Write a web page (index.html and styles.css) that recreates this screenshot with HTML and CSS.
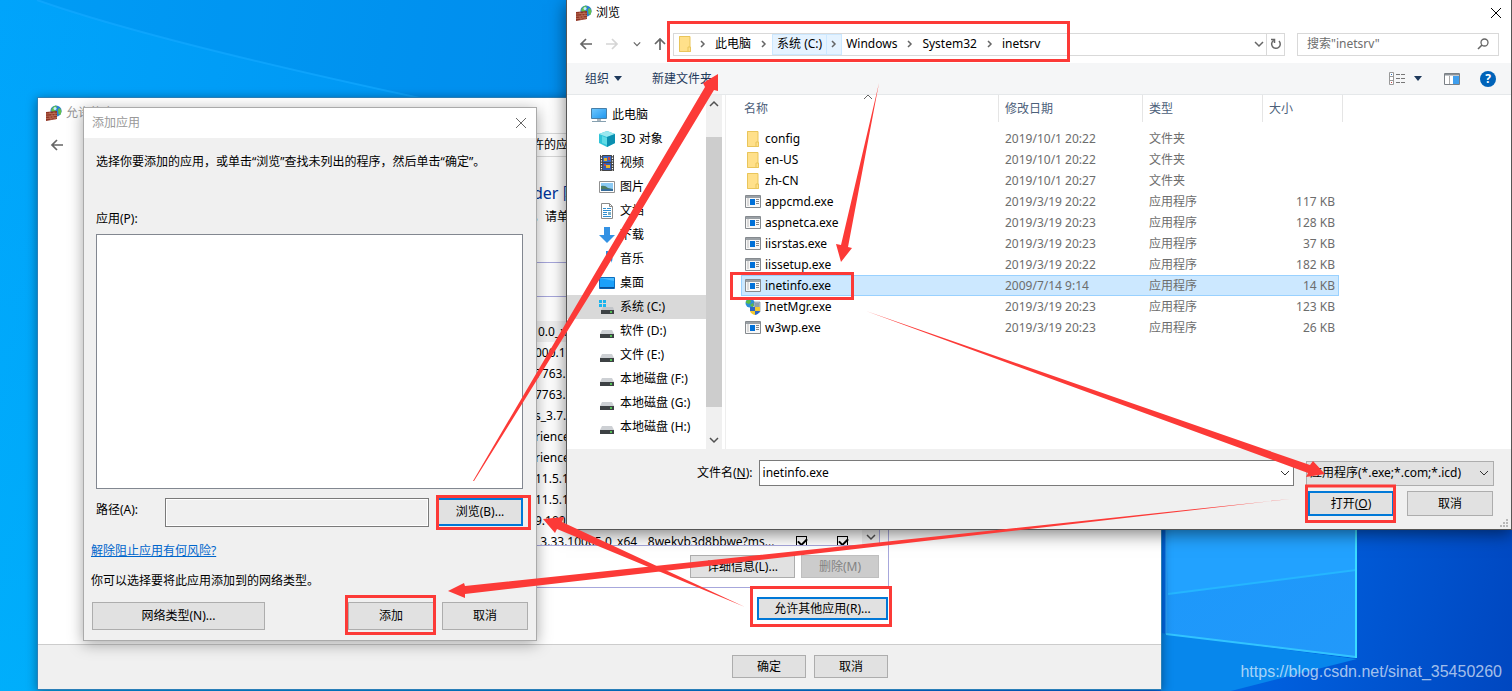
FILE: index.html
```html
<!DOCTYPE html>
<html lang="zh-CN">
<head>
<meta charset="utf-8">
<title>允许的应用</title>
<link rel="stylesheet" href="styles.css">
</head>
<body>
<svg class="defs" aria-hidden="true">
  <defs>
    <linearGradient id="gPane" x1="0" y1="0" x2="1" y2="1"><stop offset="0" stop-color="#1c98fb"/><stop offset="1" stop-color="#2299fa"/></linearGradient>
    <linearGradient id="gScreen" x1="0" y1="0" x2="1" y2="1"><stop offset="0" stop-color="#6fc8ff"/><stop offset="1" stop-color="#1e96ee"/></linearGradient>
    <symbol id="firewall" viewBox="0 0 16 16">
      <circle cx="10" cy="6" r="5.6" fill="#2a7fd6"/><path d="M6 3q2-2.500 4-2.500l1 2-2 2 1 2-3 1-2-2zM12 4l2-1 1.500 3-1 4-2-1z" fill="#62c04a"/><circle cx="9" cy="3.500" r="1.500" fill="#c8f0ff"/>
      <path d="M0 7l11-1v8l-11 2z" fill="#8f3423"/><path d="M0 9l11-.8M0 11.300l11-.8M0 13.600l11-1M4 7v2M8 7v2M6 9v2M9 9v2M4 11v2M7 11v2M5 13v2M9 13v2" stroke="#d28b72" stroke-width=".6"/>
    </symbol>
    <symbol id="folder" viewBox="0 0 14 16"><path d="M1 0h11v11h1v5H1z" fill="#ffe08a"/><path d="M1.500.500h10.500v10.500h.500v4.500H1.500zM10 15v-4h2" fill="none" stroke="#e9c55b"/></symbol>
    <symbol id="exe" viewBox="0 0 16 13"><path d="M.5.5h15v12H.5z" fill="#f8f8f8" stroke="#858a8f"/><path d="M1 1h14v2H1z" fill="#9aa0a5"/><path d="M2 3h2v8H2z" fill="#dadada"/><path d="M5 4h5v6H5z" fill="#0070d8"/><path d="M11 4.500h3M11 6.500h3M11 8.500h3" stroke="#8a8a8a"/></symbol>
    <symbol id="drive" viewBox="0 0 16 16"><path d="M3 7h10l2 4H1z" fill="#cdd0d4"/><path d="M1 11h14v4H1z" fill="#3d4144"/><path d="M11 13h2" stroke="#5bea5b" stroke-width="1.500"/></symbol>
    <symbol id="chev-d" viewBox="0 0 10 10"><path d="M1 3l4 4 4-4" fill="none" stroke="currentColor" stroke-width="1.500"/></symbol>
    <symbol id="chev-thin" viewBox="0 0 10 10"><path d="M1 3l4 4 4-4" fill="none" stroke="currentColor"/></symbol>
    <symbol id="chev-u" viewBox="0 0 10 10"><path d="M1 7l4-4 4 4" fill="none" stroke="currentColor" stroke-width="1.500"/></symbol>
    <symbol id="chev-r" viewBox="0 0 10 10"><path d="M3 2l3 3-3 3" fill="none" stroke="currentColor" stroke-width="1.500"/></symbol>
    <symbol id="left" viewBox="0 0 14 14"><path d="M13 7H2M7 2L2 7l5 5" fill="none" stroke="currentColor" stroke-width="1.700"/></symbol>
    <symbol id="close" viewBox="0 0 12 12"><path d="M1 1l10 10M11 1L1 11" fill="none" stroke="currentColor"/></symbol>
    <symbol id="tri" viewBox="0 0 8 5"><path d="M0 0h8L4 5z" fill="currentColor"/></symbol>
  </defs>
</svg>

<main class="desktop">
  <svg class="streak" width="570" height="98" viewBox="0 0 570 98" aria-hidden="true">
    <path d="M37 0Q150 40 420 98H570V0z" fill="#0078dc" opacity=".16"/>
    <path d="M37 0Q150 40 420 98" fill="none" stroke="#12a8ff" stroke-width="2" opacity=".7"/>
  </svg>
  <svg class="wallpaper" width="351" height="162" viewBox="0 0 351 162" aria-hidden="true">
    <path d="M0 104L196 130 70 162H0z" fill="#0787ec"/>
    <path d="M5 0h190v129L5 105z" fill="url(#gPane)"/>
    <path d="M5 0h190v41L7 65z" fill="#22a2ff"/>
    <path d="M7 65l188-24" stroke="#25b6ff" stroke-width="2"/>
    <path d="M5 0v105" stroke="#36a8f8"/>
    <path d="M5 105l190 23" stroke="#32c4ff" stroke-width="2"/>
    <path d="M195 0v129" stroke="#3adcff" stroke-width="2"/>
  </svg>
  <p class="watermark">https://blog.csdn.net/sinat_35450260</p>

  <section class="window allowed" aria-label="允许的应用">
    <header class="titlebar muted"><svg width="16" height="16"><use href="#firewall"/></svg><span>允许的应用</span></header>
    <div class="allowed-nav">
      <button class="icon-btn" aria-label="后退"><svg width="14" height="14"><use href="#left"/></svg></button>
      <div class="allowed-address">许的应</div>
    </div>
    <div class="allowed-body">
      <h1>der 防</h1>
      <p class="hint">，请单</p>
      <div class="group">
        <div class="group-head"></div>
        <div class="app-list">
          <ul>
            <li class="on">0.0_x</li><li>000.17</li><li>7763.1</li><li>7763.1</li><li>s_3.7.0</li><li>rience</li><li>rience</li><li>11.5.1</li><li>11.5.1</li><li>9.1002</li>
            <li><span>_3.33.10065.0_x64__8wekyb3d8bbwe?ms...</span><input type="checkbox" checked aria-label="专用"><input type="checkbox" checked aria-label="公用"></li>
          </ul>
          <div class="list-scroll"><svg width="10" height="10"><use href="#chev-d"/></svg></div>
        </div>
        <div class="group-actions"><button class="btn detail">详细信息(L)...</button><button class="btn remove" disabled>删除(M)</button></div>
      </div>
      <button class="btn focus other">允许其他应用(R)...</button>
    </div>
    <footer class="allowed-foot"><button class="btn">确定</button><button class="btn">取消</button></footer>
  </section>

  <section class="window add" role="dialog" aria-label="添加应用">
    <header class="add-title"><span>添加应用</span><button class="icon-btn" aria-label="关闭"><svg width="12" height="12"><use href="#close"/></svg></button></header>
    <div class="add-body">
      <p class="lead">选择你要添加的应用，或单击“浏览”查找未列出的程序，然后单击“确定”。</p>
      <label for="apps">应用(P):</label>
      <select id="apps" class="apps" size="8"></select>
      <div class="path-row"><label for="path">路径(A):</label><input id="path" type="text" readonly><button class="btn focus">浏览(B)...</button></div>
      <div class="more"><a href="#risk">解除阻止应用有何风险?</a><p>你可以选择要将此应用添加到的网络类型。</p></div>
      <div class="add-actions"><button class="btn net">网络类型(N)...</button><button class="btn">添加</button><button class="btn">取消</button></div>
    </div>
  </section>

  <section class="window browse" role="dialog" aria-label="浏览">
    <header class="titlebar"><svg width="16" height="16"><use href="#firewall"/></svg><span>浏览</span><button class="icon-btn close" aria-label="关闭"><svg width="12" height="12"><use href="#close"/></svg></button></header>
    <div class="browse-nav">
      <div class="history">
        <button class="icon-btn" aria-label="后退"><svg width="14" height="14"><use href="#left"/></svg></button>
        <button class="icon-btn dim" aria-label="前进"><svg class="flip" width="14" height="14"><use href="#left"/></svg></button>
        <button class="icon-btn" aria-label="历史"><svg width="8" height="8"><use href="#chev-d"/></svg></button>
        <button class="icon-btn" aria-label="向上"><svg class="up" width="14" height="14"><use href="#left"/></svg></button>
      </div>
      <nav class="address" aria-label="路径">
        <svg class="here" width="14" height="16"><use href="#folder"/></svg>
        <svg class="sep" width="10" height="10"><use href="#chev-r"/></svg><a href="#pc">此电脑</a>
        <svg class="sep" width="10" height="10"><use href="#chev-r"/></svg><span class="hot"><a href="#c">系统 (C:)</a><span class="hot-sep"><svg width="10" height="10"><use href="#chev-r"/></svg></span></span><a href="#windows">Windows</a>
        <svg class="sep" width="10" height="10"><use href="#chev-r"/></svg><a href="#system32">System32</a>
        <svg class="sep" width="10" height="10"><use href="#chev-r"/></svg><a href="#inetsrv">inetsrv</a>
        <button class="icon-btn drop" aria-label="以前的位置"><svg width="10" height="10"><use href="#chev-d"/></svg></button>
        <button class="icon-btn refresh" aria-label="刷新"><svg width="12" height="12" viewBox="0 0 12 12"><path d="M3.500 2.500A4.300 4.300 0 1 0 9 3M1 1.500h3.500v3.500" fill="none" stroke="currentColor" stroke-width="1.500"/></svg></button>
      </nav>
      <div class="search"><input type="text" placeholder='搜索"inetsrv"' aria-label="搜索"><svg width="12" height="12" viewBox="0 0 12 12"><circle cx="7.500" cy="4.500" r="3.500" fill="none" stroke="#666" stroke-width="1.300"/><path d="M5 7L1 11" stroke="#666" stroke-width="1.600"/></svg></div>
    </div>
    <div class="toolbar">
      <button class="tool">组织 <svg width="8" height="5"><use href="#tri"/></svg></button>
      <button class="tool">新建文件夹</button>
      <button class="tool view" aria-label="视图"><svg width="17" height="13" viewBox="0 0 17 13"><path d="M.5.5h4v12h-4zM.5 4.500h4M.5 8.500h4" fill="#fff" stroke="#999"/><path d="M7 2.500h4M12 2.500h4M7 6.500h4M12 6.500h4M7 10.500h4M12 10.500h4" stroke="#777"/><path d="M2 2.500h1" stroke="#2c76c8"/><path d="M2 10.500h1" stroke="#c44"/></svg><svg width="8" height="5"><use href="#tri"/></svg></button>
      <button class="tool" aria-label="预览窗格"><svg width="16" height="12" viewBox="0 0 16 12"><path d="M.5.5h15v11H.5z" fill="#fff" stroke="#7a8086"/><path d="M1 1h14v1.500H1z" fill="#8b9196"/><path d="M9 3h6v8H9z" fill="#3f9fee"/><path d="M5.500 3v8" stroke="#aaa"/></svg></button>
      <button class="help" aria-label="帮助">?</button>
    </div>
    <div class="content">
      <ul class="tree">
        <li class="root"><a href="#pc"><svg width="16" height="16" viewBox="0 0 16 16"><path d="M.5 1.500h15v10H.5z" fill="url(#gScreen)" stroke="#477fa8"/><path d="M6 12h4v2H6z" fill="#aeb8bf"/><path d="M1 14.500h14" stroke="#86a0b0"/></svg>此电脑</a></li>
        <li><a href="#3d"><svg width="16" height="16" viewBox="0 0 16 16"><path d="M8 0l8 3v9l-8 4-8-4V3z" fill="#2fc4d8"/><path d="M8 0l8 3-8 3-8-3z" fill="#9be8ef"/><path d="M8 6l8-3v9l-8 4z" fill="#0b8fb0"/><path d="M3 5l5 2v7l-5-2z" fill="#5fdbe6"/></svg>3D 对象</a></li>
        <li><a href="#video"><svg width="16" height="16" viewBox="0 0 16 16"><path d="M1 0h14v16H1z" fill="#444"/><path d="M4 1h8v6H4z" fill="#3569c9"/><path d="M4 8h8v7H4z" fill="#335cb5"/><path d="M5 3h3v3H5zM7 10h4v3H7z" fill="#e7b52e"/><path d="M9 2h2v3H9zM5 9h2v2H5z" fill="#c84b41"/><path d="M2.500 0v16M13.500 0v16" stroke="#fff" stroke-width="1.200" stroke-dasharray="1.300 1.300"/></svg>视频</a></li>
        <li><a href="#pictures"><svg width="16" height="16" viewBox="0 0 16 16"><path d="M.5 2.500h15v11H.5z" fill="#fff" stroke="#909090"/><path d="M2 4h12v8H2z" fill="#8ccaf4"/><path d="M2 7q4-1 7 2l5 1v2H2z" fill="#4c7b62"/><path d="M2 10h12v2H2z" fill="#376d9b"/></svg>图片</a></li>
        <li><a href="#docs"><svg width="16" height="16" viewBox="0 0 16 16"><path d="M2.500.5h8l3 3v12h-11z" fill="#fff" stroke="#8b8b8b"/><path d="M10.500.5v3h3" fill="none" stroke="#8b8b8b"/><path d="M4 5.500h3M8 5.500h4M4 7.500h8M4 9.500h4M4 11.500h4M4 13.500h8" stroke="#2e8ed0"/><path d="M9 9h3v3H9z" fill="#7bb1c7"/></svg>文档</a></li>
        <li><a href="#downloads"><svg width="16" height="16" viewBox="0 0 16 16"><path d="M5 0h6v8h5l-8 8-8-8h5z" fill="#3492e4"/></svg>下载</a></li>
        <li><a href="#music"><svg width="16" height="16" viewBox="0 0 16 16"><path d="M7 0h2q0 3 3 5t0 7q1-4-3-5v6q-1 3-4 3t-2-3 4-2z" fill="#1e90e8"/></svg>音乐</a></li>
        <li><a href="#desk"><svg width="16" height="16" viewBox="0 0 16 16"><path d="M.5 2.500h15v11H.5z" fill="#1ba0fa" stroke="#0c6fc0"/><path d="M1 12h14v1.500H1z" fill="#0b4f96"/><path d="M1 3l14 3V3z" fill="#4bbcff"/></svg>桌面</a></li>
        <li class="on"><a href="#c"><svg width="16" height="16" viewBox="0 0 16 16"><path d="M4 8h10l1 3H2z" fill="#c2c5c9"/><path d="M2 11h13v4H2z" fill="#3d4144"/><path d="M11 13h2" stroke="#5bea5b" stroke-width="1.500"/><path d="M0 1h3v3H0zM4 1h3v3H4zM0 5h3v3H0zM4 5h3v3H4z" fill="#18b4ee"/></svg>系统 (C:)</a></li>
        <li><a href="#d"><svg width="16" height="16"><use href="#drive"/></svg>软件 (D:)</a></li>
        <li><a href="#e"><svg width="16" height="16"><use href="#drive"/></svg>文件 (E:)</a></li>
        <li><a href="#f"><svg width="16" height="16"><use href="#drive"/></svg>本地磁盘 (F:)</a></li>
        <li><a href="#g"><svg width="16" height="16"><use href="#drive"/></svg>本地磁盘 (G:)</a></li>
        <li><a href="#h"><svg width="16" height="16"><use href="#drive"/></svg>本地磁盘 (H:)</a></li>
      </ul>
      <div class="scroll"><svg width="10" height="10"><use href="#chev-u"/></svg><div class="thumb"></div><svg width="10" height="10"><use href="#chev-d"/></svg></div>
      <div class="files">
        <svg class="sort" width="10" height="10" aria-hidden="true"><path d="M1 7l4-4 4 4" fill="none" stroke="#666"/></svg>
        <table>
          <colgroup><col class="c-name"><col class="c-date"><col class="c-type"><col class="c-size"><col class="c-end"></colgroup>
          <thead><tr><th>名称</th><th>修改日期</th><th>类型</th><th>大小</th><th></th></tr></thead>
          <tbody>
            <tr><td><svg width="16" height="16"><use href="#folder"/></svg>config</td><td>2019/10/1 20:22</td><td>文件夹</td><td></td></tr>
            <tr><td><svg width="16" height="16"><use href="#folder"/></svg>en-US</td><td>2019/10/1 20:22</td><td>文件夹</td><td></td></tr>
            <tr><td><svg width="16" height="16"><use href="#folder"/></svg>zh-CN</td><td>2019/10/1 20:27</td><td>文件夹</td><td></td></tr>
            <tr><td><svg width="16" height="13"><use href="#exe"/></svg>appcmd.exe</td><td>2019/3/19 20:22</td><td>应用程序</td><td>117 KB</td></tr>
            <tr><td><svg width="16" height="13"><use href="#exe"/></svg>aspnetca.exe</td><td>2019/3/19 20:23</td><td>应用程序</td><td>128 KB</td></tr>
            <tr><td><svg width="16" height="13"><use href="#exe"/></svg>iisrstas.exe</td><td>2019/3/19 20:23</td><td>应用程序</td><td>37 KB</td></tr>
            <tr><td><svg width="16" height="13"><use href="#exe"/></svg>iissetup.exe</td><td>2019/3/19 20:22</td><td>应用程序</td><td>182 KB</td></tr>
            <tr class="on"><td><svg width="16" height="13"><use href="#exe"/></svg>inetinfo.exe</td><td>2009/7/14 9:14</td><td>应用程序</td><td>14 KB</td></tr>
            <tr><td><svg width="16" height="16" viewBox="0 0 16 16"><circle cx="5" cy="4" r="4.500" fill="#2c8fd8"/><path d="M1 2l4-2 1 3-2 2-3-1zM5 6l3-2 1 3-2 1z" fill="#5cbb45"/><path d="M9 3h6v10H9z" fill="#b9c7d4" stroke="#6d8090" stroke-width=".6"/><path d="M10 5h4M10 7h4" stroke="#456" stroke-width=".7"/><path d="M5 8h5v4H5z" fill="#2d66c6"/><path d="M10 8h5v4h-5z" fill="#f3c92f"/><path d="M5 12h5v4q-4-1-5-4z" fill="#f3c92f"/><path d="M10 12h5q-1 3-5 4z" fill="#2d66c6"/></svg>InetMgr.exe</td><td>2019/3/19 20:23</td><td>应用程序</td><td>123 KB</td></tr>
            <tr><td><svg width="16" height="13"><use href="#exe"/></svg>w3wp.exe</td><td>2019/3/19 20:23</td><td>应用程序</td><td>26 KB</td></tr>
          </tbody>
        </table>
      </div>
    </div>
    <footer class="browse-foot">
      <div class="name-row">
        <label for="fname">文件名(<u>N</u>):</label>
        <div class="combo"><input id="fname" type="text" value="inetinfo.exe"><svg width="10" height="10"><use href="#chev-thin"/></svg></div>
        <div class="filter"><select aria-label="文件类型"><option>应用程序(*.exe;*.com;*.icd)</option></select><svg width="10" height="10"><use href="#chev-thin"/></svg></div>
      </div>
      <div class="open-row"><button class="btn focus">打开(<u>O</u>)</button><button class="btn">取消</button></div>
      <svg class="grip" width="9" height="9" viewBox="0 0 9 9" aria-hidden="true"><path d="M6 0h2v2H6zM3 3h2v2H3zM6 3h2v2H6zM0 6h2v2H0zM3 6h2v2H3zM6 6h2v2H6z" fill="#b8b8b8"/></svg>
    </footer>
  </section>

  <svg class="marks" width="1512" height="691" viewBox="0 0 1512 691" aria-hidden="true">
    <g fill="none" stroke="#fc3a37" stroke-width="3">
      <path d="M668.500 22.500h400v38h-400zM731.500 273.500h121v25h-121zM1306.500 486h88v35.500h-88zM751.500 587.500h139v38h-139zM437.500 496.500h92v32h-92zM346.500 596.500h88v37h-88z"/>
    </g>
    <g fill="#fc3a37">
      <path d="M473 481L593 277 705 87l-2-4 15-9v17l-4-1L601 277 474 481z"/>
      <path d="M879 83L841 245l-5-1 5 18 11-14-4-1z"/>
      <path d="M866 311L1310 465l3-4 12 13-19 3 2-4z"/>
      <path d="M1290 499L465 586l-1-3-16 8 17 7v-4z"/>
      <path d="M745 607L562 522l2-5-21 2 12 14 2-4z"/>
    </g>
  </svg>
</main>
</body>
</html>
```
FILE: styles.css
```css
* { box-sizing: border-box; }
body, h1, p, ul { margin: 0; padding: 0; }
ul { list-style: none; }
body, button, input, select {
  font: 12px/16px "Noto Sans", "Noto Sans CJK SC", sans-serif;
  color: #000;
}
button { padding: 0; border: 0; background: none; }
svg { display: block; flex: none; }
.defs { position: absolute; width: 0; height: 0; }

.desktop {
  position: relative;
  min-height: 100vh;
  overflow: hidden;
  background:
    linear-gradient(rgba(0, 200, 255, 0), rgba(0, 200, 255, .35)) 0 0 / 100px 100% no-repeat,
    linear-gradient(100deg, #00a4fb 0, #0091f0 38%, #0068e8 80%, #0047c0 100%);
}
.streak { position: absolute; left: 0; top: 0; }
.wallpaper { position: absolute; right: 0; bottom: 0; }
.watermark {
  position: absolute;
  right: 10px;
  bottom: 8px;
  font: 16px/22px "Liberation Sans", Arial, sans-serif;
  color: rgba(255, 255, 255, .65);
}
.window { position: absolute; }
.titlebar { display: flex; align-items: center; gap: 4px; padding: 0 9px; height: 25px; }
.muted { color: #999; }
.icon-btn { display: flex; align-items: center; justify-content: center; color: #666; }
.btn {
  display: flex;
  align-items: center;
  justify-content: center;
  background: #e1e1e1;
  border: 1px solid #adadad;
  white-space: nowrap;
}
.focus { border: 2px solid #0078d7; }
.btn:disabled { background: #ccc; border-color: #bfbfbf; color: #838383; }

/* Allowed apps window */
.allowed {
  left: 37px;
  right: 350px;
  top: 97px;
  background: #fff;
  border: 1px solid #2a7fb8;
  box-shadow: 0 2px 10px rgba(0, 0, 0, .4);
}
.allowed .titlebar { height: 30px; padding-left: 8px; }
.allowed-nav { display: flex; align-items: center; height: 33px; padding: 0 12px; gap: 458px; }
.allowed-address { flex: 1; height: 24px; line-height: 22px; padding-left: 9px; border: 1px solid #d9d9d9; }
.allowed-body { padding: 20px 273px 24px 495px; }
.allowed-body h1 { font-size: 16px; line-height: 24px; font-weight: 400; color: #003399; }
.hint { line-height: 24px; white-space: nowrap; }
.group { margin: 33px -1px 0 0; border: solid #a7a7dc; border-width: 1px 1px 1px 0; height: 326px; padding-right: 8px; }
.group-head { height: 34px; margin-right: -8px; border-bottom: 1px solid #a7a7dc; }
.app-list { display: flex; height: 249px; overflow: hidden; padding-top: 24px; border: solid #a7a7dc; border-width: 0 1px 1px 0; }
.app-list ul { flex: 1; min-width: 0; }
.app-list li { display: flex; align-items: center; height: 21px; padding-left: 2px; }
.app-list li span { width: 261px; }
.app-list .on { background: #f0f0f0; padding-left: 5px; }
.app-list input {
  appearance: none;
  position: relative;
  flex: none;
  width: 11px;
  height: 11px;
  margin: 0 30px 0 0;
  border: 1px solid #000;
  background: #fff;
}
.app-list input:last-child { margin-right: 0; }
.app-list input::after {
  content: "";
  position: absolute;
  left: 1px;
  top: 1px;
  width: 7px;
  height: 4px;
  border: solid #000;
  border-width: 0 0 2px 2px;
  transform: rotate(-45deg);
}
.list-scroll { display: flex; flex: none; width: 17px; align-items: flex-end; justify-content: center; padding-bottom: 3px; background: #f0f0f0; color: #505050; }
.group-actions { display: flex; justify-content: flex-end; gap: 6px; padding: 9px 1px 0 0; }
.group-actions .btn { height: 23px; }
.detail { width: 105px; }
.remove { width: 78px; }
.other { width: 131px; height: 23px; margin: 9px 0 0 auto; }
.allowed-foot { display: flex; justify-content: flex-end; gap: 8px; padding: 10px 273px 11px; border-top: 1px solid #ccc; background: #f0f0f0; }
.allowed-foot .btn { width: 74px; height: 23px; }

/* Add app dialog */
.add {
  left: 83px;
  top: 107px;
  width: 454px;
  background: #f0f0f0;
  border: 1px solid #aaa;
  box-shadow: 0 3px 14px rgba(0, 0, 0, .35);
}
.add-title { display: flex; align-items: center; justify-content: space-between; height: 30px; padding: 0 9px 0 8px; background: #fff; color: #999; }
.add-body { padding: 16px 8px 10px; }
.lead { margin: 0 4px 41px; white-space: nowrap; }
.add-body > label { display: block; margin-left: 4px; }
.apps { appearance: none; display: block; width: 427px; height: 255px; margin: 7px 4px 9px; background: #fff; border: 1px solid #828790; border-radius: 0; overflow: hidden; }
.path-row { display: flex; gap: 8px; padding: 0 5px 0 4px; }
.path-row label { width: 61px; padding-top: 4px; }
.path-row input { flex: 1; min-width: 0; height: 29px; border: 1px solid #7a7a7a; background: #f0f0f0; box-shadow: inset 0 0 0 1px #fff; }
.path-row .btn { width: 86px; height: 28px; }
.more { display: grid; gap: 14px; margin: 16px 0 13px -1px; }
.more a { color: #0066cc; }
.add-actions { display: flex; gap: 8px; }
.add-actions .btn { width: 86px; height: 28px; }
.add-actions .net { width: 173px; margin-right: auto; }

/* File browser dialog */
.browse {
  left: 566px;
  right: 0;
  top: 0;
  background: #fff;
  border: solid #555;
  border-width: 0 1px 1px;
  box-shadow: 0 4px 16px rgba(0, 0, 0, .5);
}
.close { margin-left: auto; color: #000; }
.browse-nav { display: flex; align-items: center; height: 38px; padding-right: 12px; }
.history { display: flex; align-items: center; gap: 12px; width: 106px; padding-left: 12px; }
.history .icon-btn:nth-child(3) { margin-left: 2px; }
.dim { color: #d5d5d5; }
.flip { transform: rotate(180deg); }
.up { transform: rotate(90deg); }
.address { display: flex; align-items: center; flex: 1; height: 23px; padding-left: 4px; border: 1px solid #d9d9d9; color: #666; }
.address a { color: #000; text-decoration: none; }
.here { margin-right: -2px; }
.sep { margin: 0 7px 0 8px; }
.hot { display: flex; align-items: center; height: 21px; margin: 0 4px 0 -4px; padding-left: 4px; background: #e5f3ff; border: 1px solid #cce8ff; }
.hot-sep { display: flex; align-items: center; height: 19px; margin-left: 4px; padding: 0 2px; border-left: 1px solid #cce8ff; }
.drop { margin-left: auto; padding-right: 2px; }
.refresh { width: 18px; height: 21px; border-left: 1px solid #d9d9d9; }
.search { display: flex; align-items: center; width: 202px; height: 23px; margin-left: 12px; padding: 0 9px; border: 1px solid #d9d9d9; }
.search input { flex: 1; min-width: 0; padding: 0; border: 0; outline: 0; }
.search input::placeholder { color: #6d6d6d; }
.toolbar { display: flex; align-items: center; gap: 22px; height: 32px; padding: 0 15px 0 18px; background: #f5f6f7; border-bottom: 1px solid #e5e8ea; }
.tool { display: flex; align-items: center; gap: 5px; color: #1e395b; }
.tool + .tool { margin-left: 8px; }
.toolbar .view { gap: 8px; margin-left: auto; }
.toolbar .view + .tool { margin-left: 0; }
.help { width: 16px; height: 16px; margin-left: -2px; border-radius: 50%; background: #0063b9; color: #fff; font-weight: 700; }
.content { display: flex; height: 354px; }
.tree { width: 139px; padding-top: 8px; }
.tree a { display: flex; align-items: center; gap: 5px; height: 24px; padding-left: 32px; color: #000; text-decoration: none; }
.tree .root a { padding-left: 24px; }
.tree .on { background: #d9d9d9; }
.scroll { display: flex; flex-direction: column; align-items: center; width: 16px; padding: 4px 0; background: #f0f0f0; color: #505050; }
.thumb { width: 16px; height: 270px; margin: 28px 0 auto; background: #cdcdcd; }
.files { position: relative; flex: 1; margin-left: 3px; padding-left: 15px; border-left: 1px solid #eee; }
.sort { position: absolute; left: 137px; top: -3px; }
table { table-layout: fixed; width: 602px; border-collapse: separate; border-spacing: 0; }
.c-name { width: 257px; }
.c-date { width: 144px; }
.c-type { width: 120px; }
.c-size { width: 77px; }
.c-end { width: 4px; }
th { height: 27px; padding: 0 6px; text-align: left; font-weight: 400; color: #4c607a; border-left: 1px solid #e5e5e5; }
th:first-child { padding: 0 2px; border-left-color: transparent; }
th:last-child { padding: 0; border-left: 0; border-right: 1px solid #e5e5e5; }
tbody::before { content: ""; display: block; height: 6px; }
td { height: 21px; padding: 0 7px; color: #6d6d6d; }
td:first-child { display: flex; align-items: center; gap: 4px; padding: 0 4px; color: #000; }
td:nth-child(4) { padding: 0 4px; text-align: right; }
.on td { background: #cce8ff; border: solid #99d1ff; border-width: 1px 0; }
.on td:first-child { border-left-width: 1px; padding-left: 3px; }
.on td:nth-child(4) { border-right-width: 1px; padding-right: 3px; }
.browse-foot { position: relative; padding: 11px 17px 13px 130px; background: #f0f0f0; }
.name-row { display: flex; align-items: center; }
.combo, .filter { position: relative; display: flex; align-items: center; color: #333; }
.combo { flex: 1; height: 26px; margin: 0 12px 0 6px; padding: 0 3px; border: 1px solid #7a7a7a; background: #fff; }
.combo input { flex: 1; min-width: 0; padding: 0; border: 0; outline: 0; }
.filter { width: 188px; height: 25px; border: 1px solid #adadad; background: #e1e1e1; padding-right: 4px; }
.filter select { appearance: none; flex: 1; min-width: 0; height: 23px; padding: 0 3px; border: 0; background: transparent; }
.open-row { display: flex; justify-content: flex-end; gap: 13px; margin-top: 5px; padding-right: 1px; }
.open-row .btn { width: 86px; height: 25px; }
.grip { position: absolute; right: 2px; bottom: 1px; }

.marks { position: absolute; left: 0; top: 0; pointer-events: none; }
```
